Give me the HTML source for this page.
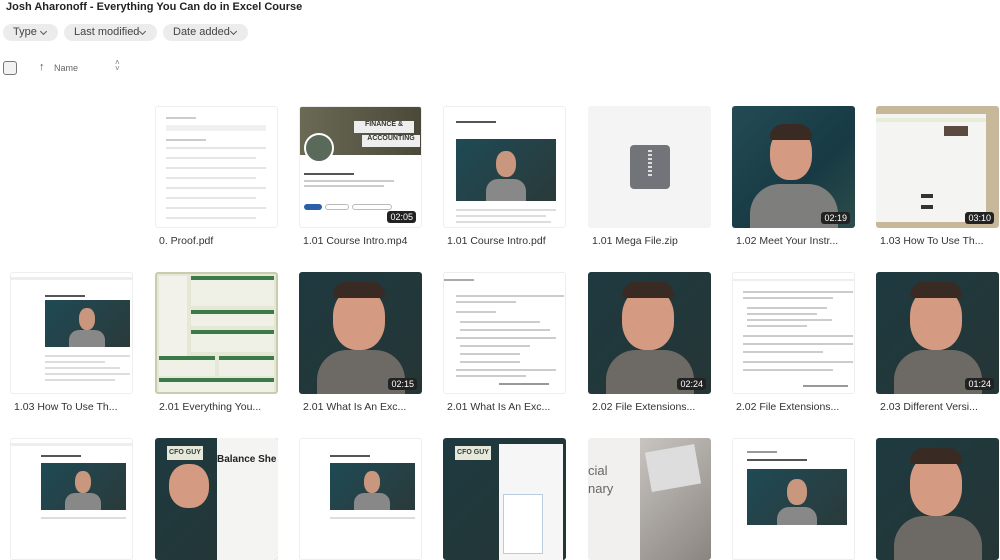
<!DOCTYPE html>
<html><head><meta charset="utf-8"><style>
*{margin:0;padding:0;box-sizing:border-box}
body{width:1000px;height:525px;overflow:hidden;background:#fff;font-family:"Liberation Sans",sans-serif;position:relative;color:#333}
.t{position:absolute;left:6px;top:1px;font-weight:bold;font-size:11px;color:#222}
.chip{position:absolute;top:24px;height:17px;border-radius:9px;background:#ececec;font-size:11px;color:#444;line-height:17px;padding-left:10px}
.chip:after{content:"";position:absolute;right:12px;top:5px;width:4px;height:4px;border-right:1px solid #555;border-bottom:1px solid #555;transform:rotate(45deg)}
.cell{position:absolute;width:123px;height:122px;border-radius:3px;overflow:hidden}
.lb{position:absolute;font-size:10.5px;color:#333;white-space:nowrap}
.dur{position:absolute;right:5px;bottom:4px;background:#222;color:#fff;font-size:9px;padding:1px 3px;border-radius:3px}
.doc{background:#fff;border:1px solid #eee}
.line{position:absolute;height:2px;background:#ccc}
.vid{background:linear-gradient(135deg,#244b55,#173a44 60%,#2d4d4a)}
.face{position:absolute;left:38px;top:22px;width:42px;height:52px;border-radius:45%;background:#d49a82}
.hair{position:absolute;left:38px;top:18px;width:42px;height:16px;border-radius:20px 20px 4px 4px;background:#3a2a24}
.shirt{position:absolute;left:18px;top:78px;width:88px;height:50px;border-radius:30px 30px 0 0;background:#7e7e7c}
.mvid{position:absolute;background:#1e3b44}
</style></head><body>
<div class="t">Josh Aharonoff - Everything You Can do in Excel Course</div>
<div class="chip" style="left:3px;width:55px">Type</div>
<div class="chip" style="left:64px;width:93px">Last modified</div>
<div class="chip" style="left:163px;width:85px">Date added</div>
<div style="position:absolute;left:3px;top:61px;width:14px;height:14px;border:1px solid #777;border-radius:3px;background:#f2f2f2"></div>
<div style="position:absolute;left:39px;top:61px;font-size:11px;color:#555">↑</div>
<div style="position:absolute;left:54px;top:63px;font-size:9px;color:#666">Name</div>
<div style="position:absolute;left:115px;top:60px;font-size:8px;color:#777;line-height:6px">˄<br>˅</div>

<!-- Row 1 -->
<div class="cell doc" style="left:155px;top:106px">
<div class="line" style="left:10px;top:10px;width:30px"></div><div class="line" style="left:10px;top:18px;width:100px;height:6px;background:#f0f0f0"></div>
<div class="line" style="left:10px;top:32px;width:40px"></div>
<div class="line" style="left:10px;top:40px;width:100px;background:#e5e5e5"></div><div class="line" style="left:10px;top:50px;width:90px;background:#e5e5e5"></div><div class="line" style="left:10px;top:60px;width:100px;background:#e5e5e5"></div><div class="line" style="left:10px;top:70px;width:90px;background:#e5e5e5"></div><div class="line" style="left:10px;top:80px;width:100px;background:#e5e5e5"></div><div class="line" style="left:10px;top:90px;width:90px;background:#e5e5e5"></div><div class="line" style="left:10px;top:100px;width:100px;background:#e5e5e5"></div><div class="line" style="left:10px;top:110px;width:90px;background:#e5e5e5"></div></div>
<div class="lb" style="left:159px;top:235px">0. Proof.pdf</div>

<div class="cell" style="left:299px;top:106px;background:#fff;border:1px solid #eee">
<div style="position:absolute;left:0;top:0;width:123px;height:48px;background:linear-gradient(90deg,#6b6a55,#4a4838)"></div>
<div style="position:absolute;left:54px;top:14px;width:60px;height:12px;background:#eee;color:#333;font-size:7px;font-weight:bold;text-align:center">FINANCE &amp;</div>
<div style="position:absolute;left:62px;top:28px;width:58px;height:12px;background:#eee;color:#333;font-size:7px;font-weight:bold;text-align:center">ACCOUNTING</div>
<div style="position:absolute;left:4px;top:26px;width:30px;height:30px;border-radius:50%;background:#5a6a5a;border:2px solid #fff"></div>
<div class="line" style="left:4px;top:66px;width:50px;background:#555"></div>
<div class="line" style="left:4px;top:73px;width:90px"></div><div class="line" style="left:4px;top:78px;width:80px"></div>
<div class="line" style="left:4px;top:97px;width:18px;height:6px;background:#2b5fa8;border-radius:3px"></div>
<div class="line" style="left:25px;top:97px;width:24px;height:6px;background:#fff;border:1px solid #bbb;border-radius:3px"></div>
<div class="line" style="left:52px;top:97px;width:40px;height:6px;background:#fff;border:1px solid #bbb;border-radius:3px"></div>
<div class="dur">02:05</div></div>
<div class="lb" style="left:303px;top:235px">1.01 Course Intro.mp4</div>

<div class="cell doc" style="left:443px;top:106px">
<div class="line" style="left:12px;top:14px;width:40px;background:#555"></div>
<div class="mvid" style="left:12px;top:32px;width:100px;height:62px;background:linear-gradient(135deg,#1f4a55,#2a3a3a)"><div style="position:absolute;left:40px;top:12px;width:20px;height:26px;border-radius:45%;background:#c9967e"></div><div style="position:absolute;left:30px;top:40px;width:40px;height:22px;border-radius:12px 12px 0 0;background:#888"></div></div>
<div class="line" style="left:12px;top:102px;width:100px;background:#ddd"></div><div class="line" style="left:12px;top:108px;width:90px;background:#ddd"></div><div class="line" style="left:12px;top:114px;width:95px;background:#ddd"></div></div>
<div class="lb" style="left:447px;top:235px">1.01 Course Intro.pdf</div>

<div class="cell" style="left:588px;top:106px;background:#f4f4f4">
<div style="position:absolute;left:42px;top:39px;width:40px;height:44px;border-radius:4px;background:#717579"></div>
<div style="position:absolute;left:60px;top:44px;width:4px;height:26px;border-left:2px dotted #ddd;border-right:2px dotted #ddd"></div></div>
<div class="lb" style="left:592px;top:235px">1.01 Mega File.zip</div>

<div class="cell vid" style="left:732px;top:106px"><div class="shirt"></div><div class="face"></div><div class="hair"></div><div class="dur">02:19</div></div>
<div class="lb" style="left:736px;top:235px">1.02 Meet Your Instr...</div>

<div class="cell" style="left:876px;top:106px;background:#c8b89a"><div style="position:absolute;left:0;top:8px;width:110px;height:108px;background:#f4f4f2"></div>
<div style="position:absolute;left:0;top:12px;width:110px;height:4px;background:#e8edd8"></div>
<div style="position:absolute;left:68px;top:20px;width:24px;height:10px;background:#5a4a40"></div>
<div style="position:absolute;left:45px;top:88px;width:12px;height:4px;background:#333"></div><div style="position:absolute;left:45px;top:99px;width:12px;height:4px;background:#333"></div>
<div class="dur">03:10</div></div>
<div class="lb" style="left:880px;top:235px">1.03 How To Use Th...</div>

<!-- Row 2 -->
<div class="cell doc" style="left:10px;top:272px">
<div class="line" style="left:0;top:4px;width:123px;height:3px;background:#eee"></div>
<div class="line" style="left:34px;top:22px;width:40px;background:#555"></div>
<div class="mvid" style="left:34px;top:27px;width:85px;height:47px;background:linear-gradient(135deg,#1f4a55,#2a3a3a)"><div style="position:absolute;left:34px;top:8px;width:16px;height:22px;border-radius:45%;background:#c9967e"></div><div style="position:absolute;left:24px;top:30px;width:36px;height:17px;border-radius:10px 10px 0 0;background:#888"></div></div>
<div class="line" style="left:34px;top:82px;width:85px;background:#ddd"></div><div class="line" style="left:34px;top:88px;width:60px;background:#ddd"></div><div class="line" style="left:34px;top:94px;width:75px;background:#ddd"></div><div class="line" style="left:34px;top:100px;width:85px;background:#ddd"></div><div class="line" style="left:34px;top:106px;width:70px;background:#ddd"></div></div>
<div class="lb" style="left:14px;top:401px">1.03 How To Use Th...</div>

<div class="cell" style="left:155px;top:272px;background:#e6e8d6;border:2px solid #c8cdb0">
<div style="position:absolute;left:2px;top:2px;width:28px;height:80px;background:#f2f2ea"></div>
<div style="position:absolute;left:34px;top:2px;width:83px;height:30px;background:#f0f1e6;border-top:4px solid #3c7a4a"></div>
<div style="position:absolute;left:34px;top:36px;width:83px;height:16px;background:#f0f1e6;border-top:4px solid #3c7a4a"></div>
<div style="position:absolute;left:34px;top:56px;width:83px;height:22px;background:#f0f1e6;border-top:4px solid #3c7a4a"></div>
<div style="position:absolute;left:2px;top:82px;width:56px;height:20px;background:#f0f1e6;border-top:4px solid #3c7a4a"></div>
<div style="position:absolute;left:62px;top:82px;width:55px;height:20px;background:#f0f1e6;border-top:4px solid #3c7a4a"></div>
<div style="position:absolute;left:2px;top:104px;width:115px;height:14px;background:#f0f1e6;border-top:4px solid #3c7a4a"></div></div>
<div class="lb" style="left:159px;top:401px">2.01 Everything You...</div>

<div class="cell vid" style="left:299px;top:272px;background:linear-gradient(135deg,#1e3a40,#253535)"><div class="shirt" style="background:#6d6a66"></div><div class="face" style="left:34px;top:16px;width:52px;height:62px"></div><div class="hair" style="left:34px;top:10px;width:52px"></div><div class="dur">02:15</div></div>
<div class="lb" style="left:303px;top:401px">2.01 What Is An Exc...</div>

<div class="cell doc" style="left:443px;top:272px">
<div class="line" style="left:0;top:6px;width:30px;background:#aaa"></div>
<div class="line" style="left:12px;top:22px;width:108px;background:#ccc"></div><div class="line" style="left:12px;top:28px;width:60px;background:#ccc"></div>
<div class="line" style="left:12px;top:38px;width:40px;background:#ccc"></div>
<div class="line" style="left:16px;top:48px;width:80px;background:#ccc"></div><div class="line" style="left:16px;top:56px;width:90px;background:#ccc"></div><div class="line" style="left:12px;top:64px;width:100px;background:#ccc"></div><div class="line" style="left:16px;top:72px;width:70px;background:#ccc"></div><div class="line" style="left:16px;top:80px;width:60px;background:#ccc"></div><div class="line" style="left:16px;top:88px;width:60px;background:#ccc"></div><div class="line" style="left:12px;top:96px;width:100px;background:#ccc"></div><div class="line" style="left:12px;top:102px;width:70px;background:#ccc"></div>
<div class="line" style="left:55px;top:110px;width:50px;background:#999"></div></div>
<div class="lb" style="left:447px;top:401px">2.01 What Is An Exc...</div>

<div class="cell vid" style="left:588px;top:272px;background:linear-gradient(135deg,#1e3a40,#253535)"><div class="shirt" style="background:#6d6a66"></div><div class="face" style="left:34px;top:16px;width:52px;height:62px"></div><div class="hair" style="left:34px;top:10px;width:52px"></div><div class="dur">02:24</div></div>
<div class="lb" style="left:592px;top:401px">2.02 File Extensions...</div>

<div class="cell doc" style="left:732px;top:272px">
<div class="line" style="left:0;top:6px;width:123px;background:#eee"></div>
<div class="line" style="left:10px;top:18px;width:110px;background:#ccc"></div><div class="line" style="left:10px;top:24px;width:90px;background:#ccc"></div>
<div class="line" style="left:14px;top:34px;width:80px;background:#ccc"></div><div class="line" style="left:14px;top:40px;width:70px;background:#ccc"></div><div class="line" style="left:14px;top:46px;width:85px;background:#ccc"></div><div class="line" style="left:14px;top:52px;width:60px;background:#ccc"></div><div class="line" style="left:10px;top:62px;width:110px;background:#ccc"></div><div class="line" style="left:10px;top:70px;width:110px;background:#ccc"></div><div class="line" style="left:10px;top:78px;width:80px;background:#ccc"></div><div class="line" style="left:10px;top:88px;width:110px;background:#ccc"></div><div class="line" style="left:10px;top:96px;width:90px;background:#ccc"></div>
<div class="line" style="left:70px;top:112px;width:45px;background:#999"></div></div>
<div class="lb" style="left:736px;top:401px">2.02 File Extensions...</div>

<div class="cell vid" style="left:876px;top:272px;background:linear-gradient(135deg,#1e3a40,#253535)"><div class="shirt" style="background:#6d6a66"></div><div class="face" style="left:34px;top:16px;width:52px;height:62px"></div><div class="hair" style="left:34px;top:10px;width:52px"></div><div class="dur">01:24</div></div>
<div class="lb" style="left:880px;top:401px">2.03 Different Versi...</div>

<!-- Row 3 -->
<div class="cell doc" style="left:10px;top:438px">
<div class="line" style="left:0;top:4px;width:123px;height:3px;background:#eee"></div>
<div class="line" style="left:30px;top:16px;width:40px;background:#555"></div>
<div class="mvid" style="left:30px;top:24px;width:85px;height:47px;background:linear-gradient(135deg,#1f4a55,#2a3a3a)"><div style="position:absolute;left:34px;top:8px;width:16px;height:22px;border-radius:45%;background:#c9967e"></div><div style="position:absolute;left:24px;top:30px;width:36px;height:17px;border-radius:10px 10px 0 0;background:#888"></div></div>
<div class="line" style="left:30px;top:78px;width:85px;background:#ddd"></div></div>

<div class="cell" style="left:155px;top:438px;background:linear-gradient(135deg,#1e3a40,#253535)">
<div style="position:absolute;left:12px;top:8px;width:36px;height:14px;background:#e8e8d8;color:#244;font-size:7px;font-weight:bold;text-align:center;line-height:14px">CFO GUY</div>
<div style="position:absolute;left:62px;top:0;width:61px;height:122px;background:#f4f4f2"></div>
<div style="position:absolute;left:62px;top:16px;width:61px;height:12px;color:#222;font-size:10px;font-weight:bold">Balance She</div>
<div style="position:absolute;left:14px;top:26px;width:40px;height:44px;border-radius:45%;background:#d49a82"></div></div>

<div class="cell doc" style="left:299px;top:438px">
<div class="line" style="left:30px;top:16px;width:40px;background:#555"></div>
<div class="mvid" style="left:30px;top:24px;width:85px;height:47px;background:linear-gradient(135deg,#1f4a55,#2a3a3a)"><div style="position:absolute;left:34px;top:8px;width:16px;height:22px;border-radius:45%;background:#c9967e"></div><div style="position:absolute;left:24px;top:30px;width:36px;height:17px;border-radius:10px 10px 0 0;background:#888"></div></div>
<div class="line" style="left:30px;top:78px;width:85px;background:#ddd"></div></div>

<div class="cell" style="left:443px;top:438px;background:linear-gradient(135deg,#1e3a40,#253535)">
<div style="position:absolute;left:12px;top:8px;width:36px;height:14px;background:#e8e8d8;color:#244;font-size:7px;font-weight:bold;text-align:center;line-height:14px">CFO GUY</div>
<div style="position:absolute;left:56px;top:6px;width:64px;height:116px;background:#f6f6f6"></div>
<div style="position:absolute;left:60px;top:56px;width:40px;height:60px;background:#fff;border:1px solid #bcd"></div></div>

<div class="cell" style="left:588px;top:438px;background:#f2f0ee">
<div style="position:absolute;left:0;top:24px;font-size:13px;color:#666;line-height:18px">cial<br>nary</div>
<div style="position:absolute;left:52px;top:0;width:71px;height:122px;background:linear-gradient(135deg,#c8c4c0,#8a8580)"></div>
<div style="position:absolute;left:60px;top:10px;width:50px;height:40px;background:#ddd;transform:rotate(-10deg)"></div></div>

<div class="cell doc" style="left:732px;top:438px">
<div class="line" style="left:14px;top:12px;width:30px;background:#999"></div>
<div class="line" style="left:14px;top:20px;width:60px;background:#555"></div>
<div class="mvid" style="left:14px;top:30px;width:100px;height:56px;background:linear-gradient(135deg,#1f4a55,#2a3a3a)"><div style="position:absolute;left:40px;top:10px;width:20px;height:26px;border-radius:45%;background:#c9967e"></div><div style="position:absolute;left:30px;top:38px;width:40px;height:18px;border-radius:12px 12px 0 0;background:#888"></div></div></div>

<div class="cell vid" style="left:876px;top:438px;background:linear-gradient(135deg,#1e3a40,#253535)"><div class="shirt" style="background:#6d6a66"></div><div class="face" style="left:34px;top:16px;width:52px;height:62px"></div><div class="hair" style="left:34px;top:10px;width:52px"></div></div>
</body></html>
